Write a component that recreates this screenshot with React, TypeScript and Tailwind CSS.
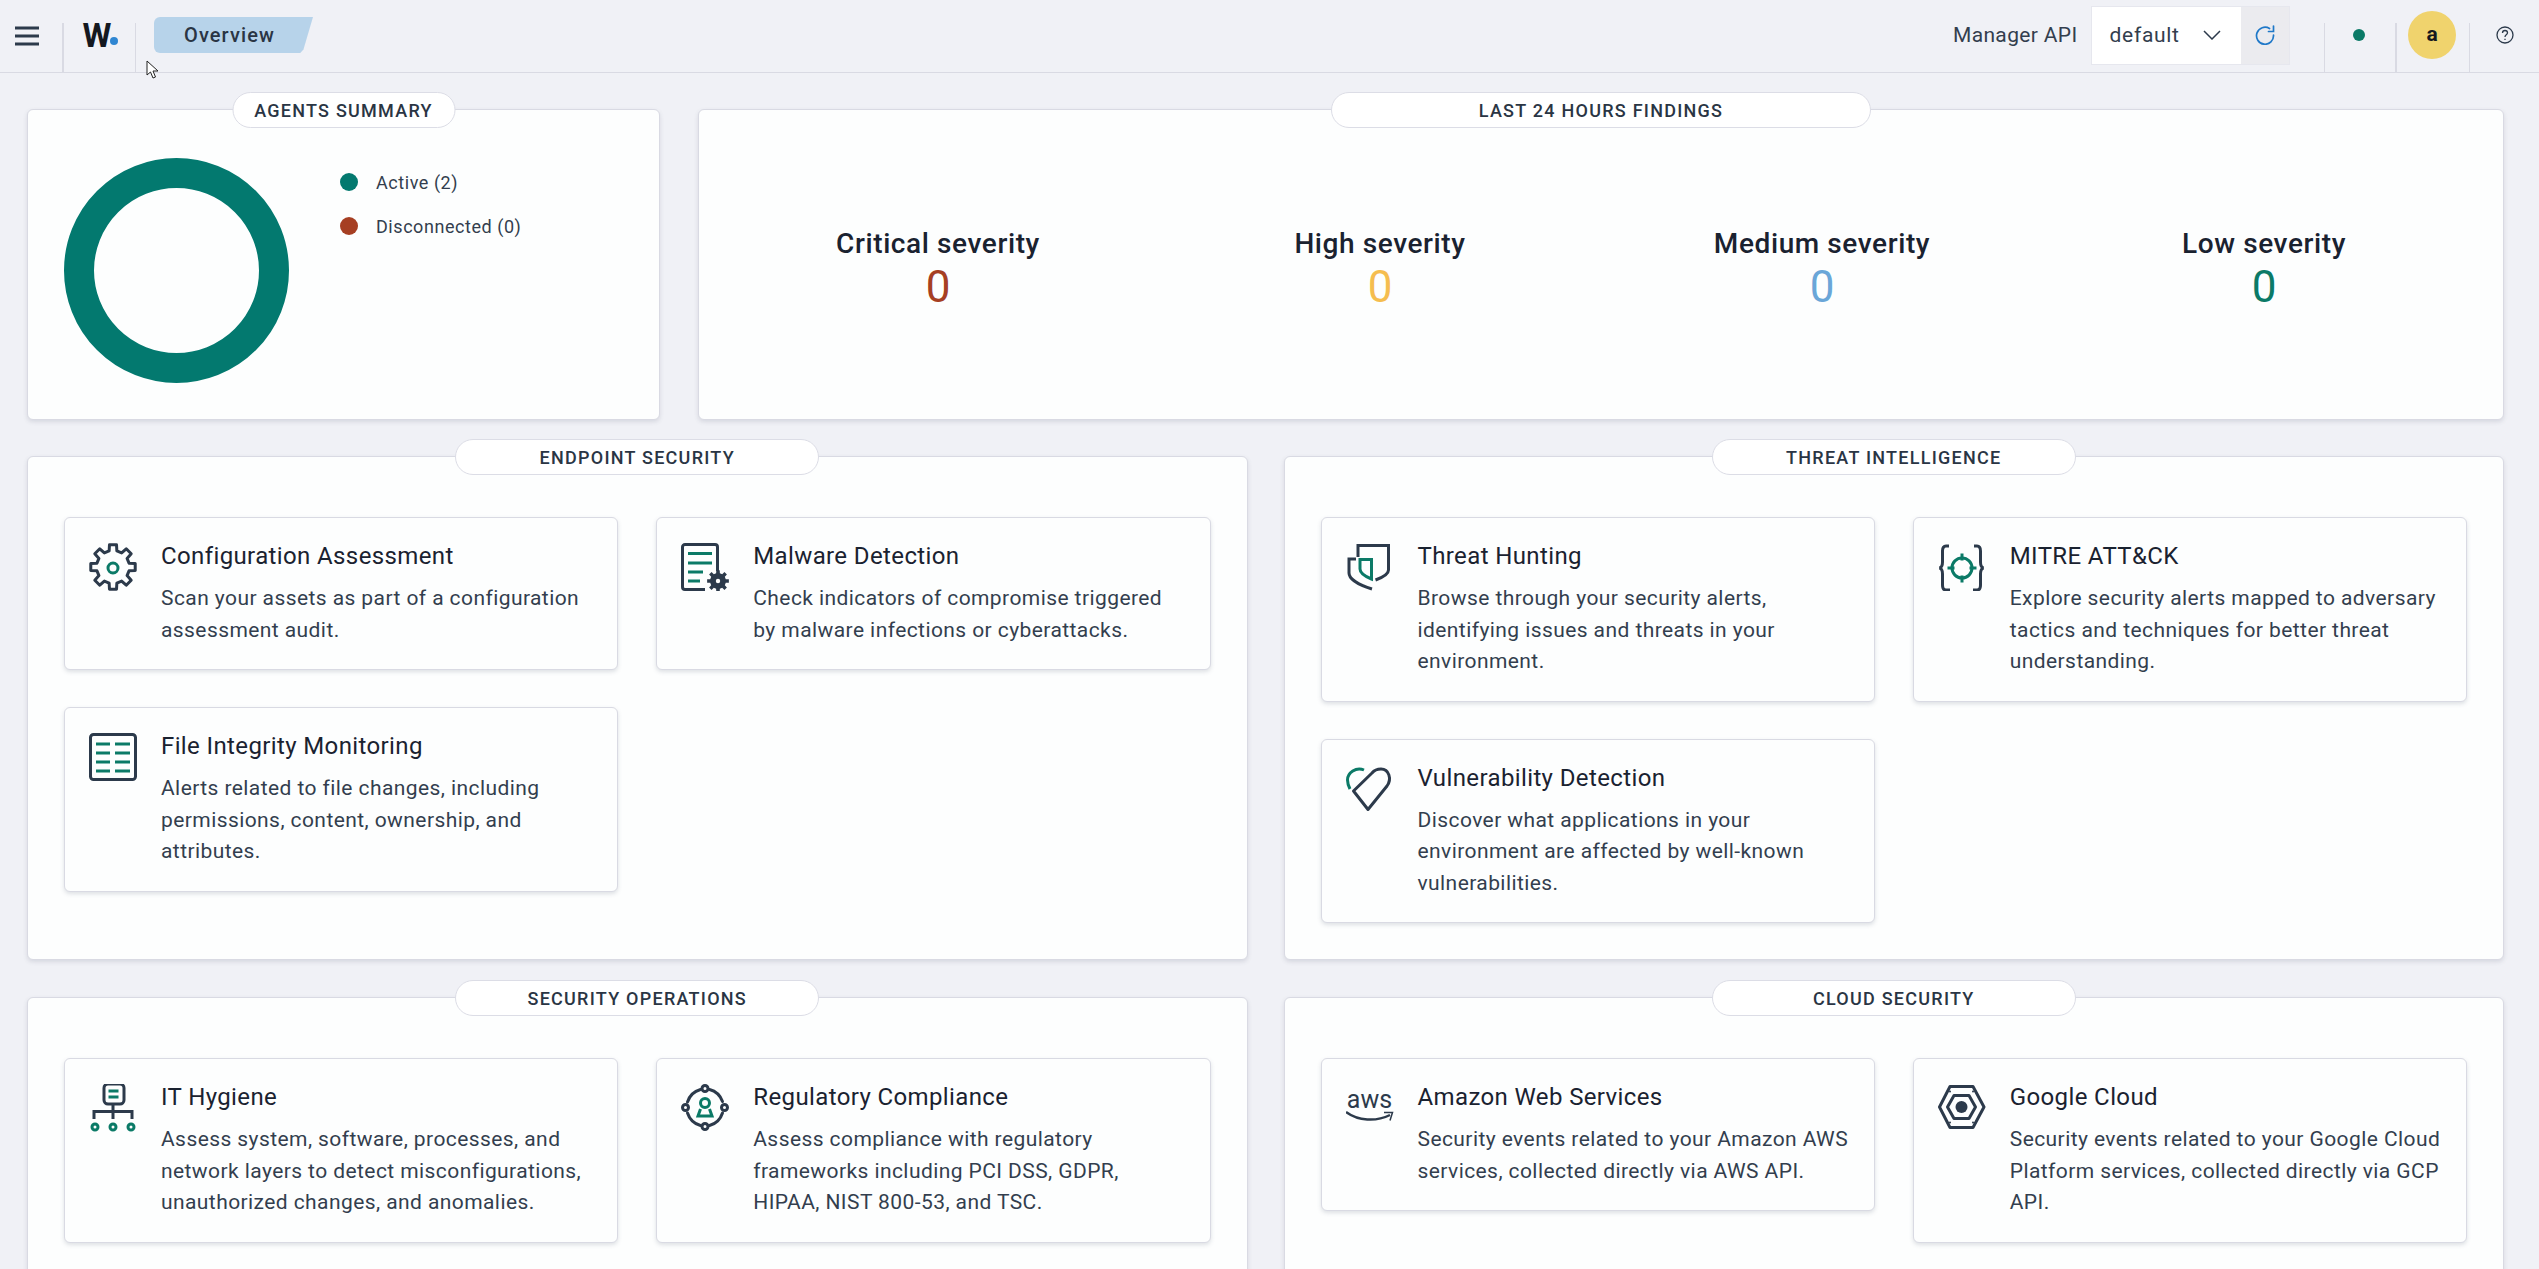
import React from "react";

const DARK = "#2c3a4b";
const TEAL = "#0b7a67";

function gearPath(cx: number, cy: number, ro: number, ri: number, n: number) {
    const step = (Math.PI * 2) / n;
    const pts: string[] = [];
    for (let i = 0; i < n; i++) {
        const a = i * step - Math.PI / 2;
        const w = step * 0.2;
        const w2 = step * 0.3;
        const p = (r: number, t: number) => `${(cx + r * Math.cos(t)).toFixed(2)} ${(cy + r * Math.sin(t)).toFixed(2)}`;
        pts.push(p(ri, a - w2), p(ro, a - w), p(ro, a + w), p(ri, a + w2));
    }
    return "M" + pts.join("L") + "Z";
}

function Icon({ children }: { children: React.ReactNode }) {
    return (
        <svg width="48" height="48" viewBox="0 0 48 48" fill="none" strokeWidth="3" className="shrink-0">
            {children}
        </svg>
    );
}

function GearIcon() {
    return (
        <Icon>
            <path d={gearPath(24, 24, 22.5, 16.5, 8)} stroke={DARK} strokeLinejoin="round" />
            <circle cx="24" cy="25" r="5" stroke={TEAL} />
        </Icon>
    );
}

function MalwareIcon() {
    return (
        <Icon>
            <path d="M36.5 28V4a2.5 2.5 0 0 0-2.5-2.5H4A2.5 2.5 0 0 0 1.5 4v40A2.5 2.5 0 0 0 4 46.5h20" stroke={DARK} />
            <path d="M7 10.5h24M7 20h24M7 29h15M7 38h12" stroke={TEAL} />
            <path d={gearPath(37, 38, 11, 8, 8)} fill={DARK} />
            <circle cx="37" cy="38" r="2.2" fill="#fff" />
        </Icon>
    );
}

function FileIcon() {
    return (
        <Icon>
            <rect x="1.5" y="1.5" width="45" height="45" rx="3" stroke={DARK} />
            <path d="M7 11h14M26 11h15M7 20h14M26 20h15M7 29h14M26 29h15M7 38h14M26 38h15" stroke={TEAL} />
        </Icon>
    );
}

function ThreatIcon() {
    return (
        <Icon>
            <path d="M12 14V2.5h30.5V27c0 4-6 7.500-13 10" stroke={DARK} />
            <path d="M10 16H3v14c0 6 10 12 23 16" stroke={DARK} />
            <path d="M14 16.500h11.500V36C18 33 14 30 14 26Z" stroke={TEAL} />
        </Icon>
    );
}

function MitreIcon() {
    return (
        <Icon>
            <path d="M11 3H8C5 3 4.500 5 4.500 8v11c0 3-1 5.500-3 6 2 .5 3 3 3 6v11c0 3 .5 5 3.500 5h4" stroke={DARK} />
            <path d="M36 3h3c3 0 3.500 2 3.500 5v11c0 3 1 5.500 3 6-2 .5-3 3-3 6v11c0 3-.5 5-3.500 5h-4" stroke={DARK} />
            <circle cx="24" cy="25" r="10" stroke={TEAL} />
            <path d="M24 10.500v7M24 32.500v7M9.500 25h7M31.500 25h7" stroke={TEAL} />
        </Icon>
    );
}

function HeartIcon() {
    return (
        <Icon>
            <path d="M7.500 26 22 44.500 41 21c5-7 2-17-6-17-4 0-7 1.500-9 4Z" stroke={DARK} strokeLinejoin="round" />
            <path d="M18 5C10 1.500 1.500 8 1.500 15c0 3 1 6 2.500 9" stroke={TEAL} />
        </Icon>
    );
}

function HygieneIcon() {
    return (
        <Icon>
            <rect x="15" y="0" width="20" height="20" rx="4" stroke={DARK} />
            <path d="M19.500 7h10M19.500 13h10" stroke={TEAL} />
            <path d="M5 35v-7.500h38V35M24 20v15" stroke={DARK} />
            <circle cx="6" cy="43" r="3" stroke={TEAL} />
            <circle cx="24" cy="43" r="3" stroke={TEAL} />
            <circle cx="42" cy="43" r="3" stroke={TEAL} />
        </Icon>
    );
}

function ComplianceIcon() {
    return (
        <Icon>
            <path d="M28.500 5.500a19 19 0 0 1 13 12" stroke={DARK} strokeLinecap="round" />
            <path d="M41.500 29a19 19 0 0 1-13 12.500" stroke={DARK} strokeLinecap="round" />
            <path d="M19.500 41.500a19 19 0 0 1-13-12.500" stroke={DARK} strokeLinecap="round" />
            <path d="M6.500 18a19 19 0 0 1 13-12.500" stroke={DARK} strokeLinecap="round" />
            <circle cx="24" cy="4.500" r="3" stroke={DARK} />
            <circle cx="24" cy="42.500" r="3" stroke={DARK} />
            <circle cx="4.500" cy="23.500" r="3" stroke={DARK} />
            <circle cx="43.500" cy="23.500" r="3" stroke={DARK} />
            <circle cx="24" cy="19" r="4.500" stroke={TEAL} />
            <path d="M19.500 25 17 32h14l-2.500-7" stroke={TEAL} />
        </Icon>
    );
}

function AwsIcon() {
    return (
        <Icon>
            <text x="23.500" y="24" textAnchor="middle" fontFamily="Roboto, sans-serif" fontSize="25" fill={DARK} stroke="none">
                aws
            </text>
            <path d="M0 28c12 9 30 10 44 3" stroke={DARK} strokeWidth="2.500" />
            <path d="M38 28.500h8.500l-2.500 8" stroke={DARK} strokeWidth="1.500" />
        </Icon>
    );
}

function GcpIcon() {
    return (
        <Icon>
            <path d="M12 2.500h23L46 23 35 43.500H12L1.500 23Z" stroke={DARK} strokeLinejoin="round" />
            <path d="M16 11.500h15L37.500 23 31 34.500H16L9.500 23Z" stroke={DARK} strokeLinejoin="round" />
            <circle cx="23.500" cy="23" r="6" fill={DARK} />
            <circle cx="12" cy="7.500" r="1" fill={DARK} />
            <circle cx="35" cy="7.500" r="1" fill={DARK} />
            <circle cx="12" cy="38.500" r="1" fill={DARK} />
            <circle cx="35" cy="38.500" r="1" fill={DARK} />
        </Icon>
    );
}

function Pill({ title, width }: { title: string; width: string }) {
    return (
        <div
            className={`absolute -top-[18px] left-1/2 -translate-x-1/2 h-[36px] ${width} flex items-center justify-center bg-white border-[1.5px] border-[#dcdde6] rounded-[18px] text-[18px] font-medium tracking-[1.25px] text-[#2a3544] uppercase`}
        >
            {title}
        </div>
    );
}

function Panel({ title, pillWidth, className, children }: { title: string; pillWidth: string; className?: string; children: React.ReactNode }) {
    return (
        <section className={`relative bg-[#fdfefe] border border-[#d9dae3] rounded-[6px] shadow-[0_2px_4px_rgba(80,90,110,0.16)] ${className ?? ""}`}>
            <Pill title={title} width={pillWidth} />
            {children}
        </section>
    );
}

function AppCard({ icon, title, text }: { icon: React.ReactNode; title: string; text: string }) {
    return (
        <div className="flex gap-[24px] pt-[25px] px-[24px] pb-[23px] bg-[#fdfefe] border border-[#d9dae3] rounded-[6px] shadow-[0_2px_4px_rgba(80,90,110,0.18)] self-start w-full">
            {icon}
            <div className="min-w-0">
                <h3 className="text-[24px] leading-[27px] mb-[13px] text-[#1a2230] font-normal tracking-[0.38px]">{title}</h3>
                <p className="text-[21px] leading-[31.5px] text-[#333e4e] tracking-[0.42px]">{text}</p>
            </div>
        </div>
    );
}

function CardGrid({ children }: { children: React.ReactNode }) {
    return <div className="grid grid-cols-2 gap-x-[38px] gap-y-[37px] pt-[60px] px-[36px] pb-[36px]">{children}</div>;
}

function Severity({ label, color }: { label: string; color: string }) {
    return (
        <div className="flex-1 flex flex-col items-center">
            <div className="text-[28px] leading-[41px] font-medium tracking-[0.6px] text-[#1a2230]">{label}</div>
            <div className={`text-[44px] leading-[46px] ${color}`}>0</div>
        </div>
    );
}

function LegendItem({ color, label }: { color: string; label: string }) {
    return (
        <div className="flex items-center gap-[18px] h-[18px]">
            <span className={`w-[18px] h-[18px] rounded-full ${color}`} />
            <span className="text-[18px] text-[#333e4e] tracking-[0.55px]">{label}</span>
        </div>
    );
}

function Divider() {
    return <div className="w-[1.5px] h-[49px] self-end bg-[#d9dae3]" />;
}

export default function App() {
    return (
        <div className="relative h-screen overflow-hidden bg-[#f0f1f6] font-['Roboto',sans-serif]">
            {/* Top bar */}
            <header className="h-[73px] flex border-b border-[#d9dae3]">
                <div className="w-[62px] flex items-center pl-[15px]">
                    <svg width="24" height="20" viewBox="0 0 24 20" fill="none" stroke={DARK} strokeWidth="3">
                        <path d="M0 2h24M0 10h24M0 18h24" />
                    </svg>
                </div>
                <Divider />
                <div className="w-[71px] flex items-center pl-[19px] pb-[2px]">
                    <span className="text-[33px] leading-none font-bold text-[#14181f] tracking-[-1px]">W</span>
                    <span className="w-[8px] h-[8px] rounded-full bg-[#2f86d2] self-end mb-[25px]" />
                </div>
                <Divider />
                <div className="ml-[18px] mt-[17px] w-[159px] h-[36px] flex items-center pl-[30px] bg-[#b7d3ea] rounded-l-[6px] [clip-path:polygon(0_0,100%_0,94%_90%,92%_100%,0_100%)] text-[20px] font-medium text-[#2a3544] tracking-[1.1px]">
                    Overview
                </div>
                <div className="ml-auto flex items-center">
                    <span className="text-[21px] text-[#333e4e] tracking-[0.35px] mr-[13px] -mt-[1px]">Manager API</span>
                    <div className="flex h-[59px] w-[199px] -mt-[2px] border-[1.5px] border-[#e6e7ee]">
                        <div className="flex-1 bg-white flex items-center pl-[18px] text-[21px] text-[#333e4e] tracking-[0.7px]">
                            <span className="mt-[2px]">default</span>
                            <svg className="ml-auto mr-[20px]" width="18" height="10" viewBox="0 0 18 10" fill="none" stroke={DARK} strokeWidth="1.500">
                                <path d="M1 1l8 8 8-8" />
                            </svg>
                        </div>
                        <div className="w-[48px] bg-[#ebebef] flex items-center justify-center">
                            <svg width="20" height="20" viewBox="0 0 20 20" fill="none" stroke="#1f78c8" strokeWidth="1.700" strokeLinecap="round">
                                <path d="M14.500 3.500A8.500 8.500 0 1 0 18.500 10" />
                                <path d="M18.500 1v5.500h-5" />
                            </svg>
                        </div>
                    </div>
                    <div className="w-[34px]" />
                    <Divider />
                    <div className="w-[70px] flex justify-center pr-[3px]">
                        <span className="w-[12px] h-[12px] rounded-full bg-[#0b7a67] -mt-[2px]" />
                    </div>
                    <Divider />
                    <div className="w-[72px] flex justify-center pr-[1px]">
                        <span className="w-[48px] h-[48px] rounded-full bg-[#f0d36d] flex items-center justify-center text-[21px] font-bold text-[#14181f] -mt-[2px]">a</span>
                    </div>
                    <Divider />
                    <div className="w-[69px] flex justify-center">
                        <svg className="-mt-[2px]" width="18" height="18" viewBox="0 0 18 18" fill="none" stroke={DARK} strokeWidth="1.300">
                            <circle cx="9" cy="9" r="8" />
                            <path d="M6.500 7c0-1.500 1-2.500 2.500-2.500s2.500 1 2.500 2.300c0 2-2.500 2-2.500 4.200" />
                            <path d="M9 12.800v1.200" />
                        </svg>
                    </div>
                </div>
            </header>

            <main className="pl-[27px] pr-[35px] pt-[36px] flex flex-col gap-[36px]">
                <div className="flex gap-[38px]">
                    <Panel title="Agents summary" pillWidth="w-[223px]" className="w-[633px] h-[311px]">
                        <div className="flex pt-[48px] pl-[36px]">
                            <div className="w-[225px] h-[225px] rounded-full border-[30px] border-[#03796f]" />
                            <div className="ml-[51px] pt-[15px] flex flex-col gap-[26px]">
                                <LegendItem color="bg-[#03796f]" label="Active (2)" />
                                <LegendItem color="bg-[#a63f23]" label="Disconnected (0)" />
                            </div>
                        </div>
                    </Panel>
                    <Panel title="Last 24 hours findings" pillWidth="w-[540px]" className="flex-1 h-[311px]">
                        <div className="flex pt-[113px] px-[18px]">
                            <Severity label="Critical severity" color="text-[#a63f23]" />
                            <Severity label="High severity" color="text-[#f5bd4f]" />
                            <Severity label="Medium severity" color="text-[#6aa6d8]" />
                            <Severity label="Low severity" color="text-[#0b7a67]" />
                        </div>
                    </Panel>
                </div>

                <div className="grid grid-cols-2 gap-x-[36px] gap-y-[37px]">
                    <Panel title="Endpoint security" pillWidth="w-[364px]">
                        <CardGrid>
                            <AppCard icon={<GearIcon />} title="Configuration Assessment" text="Scan your assets as part of a configuration assessment audit." />
                            <AppCard icon={<MalwareIcon />} title="Malware Detection" text="Check indicators of compromise triggered by malware infections or cyberattacks." />
                            <AppCard icon={<FileIcon />} title="File Integrity Monitoring" text="Alerts related to file changes, including permissions, content, ownership, and attributes." />
                        </CardGrid>
                    </Panel>
                    <Panel title="Threat intelligence" pillWidth="w-[364px]">
                        <CardGrid>
                            <AppCard icon={<ThreatIcon />} title="Threat Hunting" text="Browse through your security alerts, identifying issues and threats in your environment." />
                            <AppCard icon={<MitreIcon />} title="MITRE ATT&CK" text="Explore security alerts mapped to adversary tactics and techniques for better threat understanding." />
                            <AppCard icon={<HeartIcon />} title="Vulnerability Detection" text="Discover what applications in your environment are affected by well-known vulnerabilities." />
                        </CardGrid>
                    </Panel>
                    <Panel title="Security operations" pillWidth="w-[364px]">
                        <CardGrid>
                            <AppCard icon={<HygieneIcon />} title="IT Hygiene" text="Assess system, software, processes, and network layers to detect misconfigurations, unauthorized changes, and anomalies." />
                            <AppCard icon={<ComplianceIcon />} title="Regulatory Compliance" text="Assess compliance with regulatory frameworks including PCI DSS, GDPR, HIPAA, NIST 800-53, and TSC." />
                        </CardGrid>
                    </Panel>
                    <Panel title="Cloud security" pillWidth="w-[364px]">
                        <CardGrid>
                            <AppCard icon={<AwsIcon />} title="Amazon Web Services" text="Security events related to your Amazon AWS services, collected directly via AWS API." />
                            <AppCard icon={<GcpIcon />} title="Google Cloud" text="Security events related to your Google Cloud Platform services, collected directly via GCP API." />
                        </CardGrid>
                    </Panel>
                </div>
            </main>

            {/* Mouse pointer left in the capture */}
            <svg className="absolute left-[146px] top-[60px]" width="13" height="20" viewBox="0 0 13 20" fill="#fff" stroke="#222" strokeWidth="1">
                <path d="M1 1v14l3.500-3 2.500 6 2.500-1-2.500-6H12Z" />
            </svg>
        </div>
    );
}
